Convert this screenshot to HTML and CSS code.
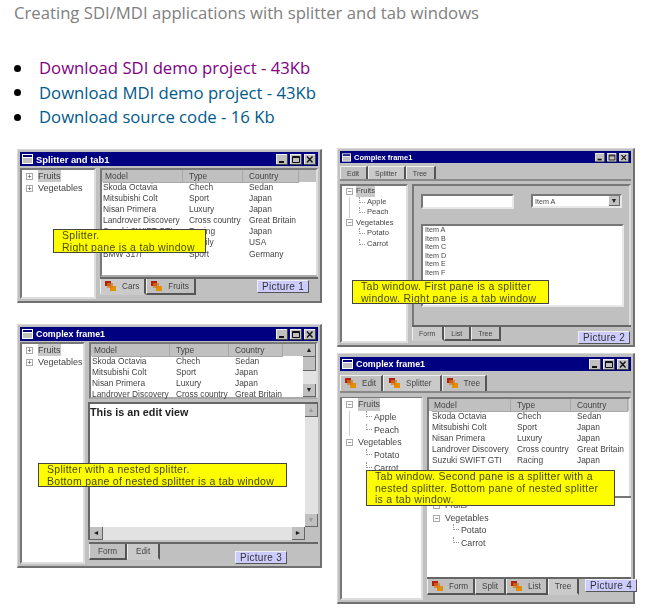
FILE: index.html
```html
<!DOCTYPE html>
<html>
<head>
<meta charset="utf-8">
<title>Creating SDI/MDI applications with splitter and tab windows</title>
<link rel="stylesheet" href="styles.css">
</head>
<body>
<svg class="defs" width="0" height="0">
	<symbol id="tabicon" viewBox="0 0 11 11">
		<rect x="0" y="0" width="6" height="5" fill="#b02010"/>
		<rect x="5" y="5" width="6" height="5" fill="#e09000"/>
		<rect x="2" y="2" width="6" height="5" fill="#d87818" opacity=".7"/>
	</symbol>
	<symbol id="winicon" viewBox="0 0 11 10">
		<rect width="11" height="10" fill="#fff"/>
		<rect x="1" y="1" width="9" height="2" fill="#000080"/>
		<rect x="1" y="4" width="9" height="5" fill="#c0c0c0"/>
	</symbol>
	<symbol id="btnmin" viewBox="0 0 12 11">
		<rect width="12" height="11" fill="#444"/>
		<rect width="11" height="10" fill="#eee"/>
		<rect x="1" y="1" width="10" height="9" fill="#c0c0c0"/>
		<rect x="3" y="7" width="5" height="2" fill="#111"/>
	</symbol>
	<symbol id="btnmax" viewBox="0 0 12 11">
		<rect width="12" height="11" fill="#444"/>
		<rect width="11" height="10" fill="#eee"/>
		<rect x="1" y="1" width="10" height="9" fill="#c0c0c0"/>
		<path d="M2.5 2.5h7v6h-7z M2.5 3.5h7" fill="none" stroke="#111"/>
	</symbol>
	<symbol id="btnclose" viewBox="0 0 12 11">
		<rect width="12" height="11" fill="#444"/>
		<rect width="11" height="10" fill="#eee"/>
		<rect x="1" y="1" width="10" height="9" fill="#c0c0c0"/>
		<path d="M3 2.5l5.5 6M8.5 2.5l-5.5 6" fill="none" stroke="#111" stroke-width="1.4"/>
	</symbol>
</svg>

<div class="title">Creating SDI/MDI applications with splitter and tab windows</div>
<ul class="downloads">
	<li><a class="visited" href="#">Download SDI demo project - 43Kb</a></li>
	<li><a href="#">Download MDI demo project - 43Kb</a></li>
	<li><a href="#">Download source code - 16 Kb</a></li>
</ul>

<div class="shots">

	<!-- Picture 1 -->
	<div class="win win1">
		<div class="caption"><svg class="capicon"><use href="#winicon"/></svg><span class="captext">Splitter and tab1</span><svg class="cbtn"><use href="#btnmin"/></svg><svg class="cbtn"><use href="#btnmax"/></svg><svg class="cbtn"><use href="#btnclose"/></svg></div>
		<div class="split">
			<div class="tree tree1">
				<div class="node"><b class="exp">+</b><span class="sel">Fruits</span></div>
				<div class="node"><b class="exp">+</b><span>Vegetables</span></div>
			</div>
			<div class="right">
				<div class="list grow">
					<div class="row head cols1"><span>Model</span><span>Type</span><span>Country</span></div>
					<div class="row cols1"><span>Skoda Octavia</span><span>Chech</span><span>Sedan</span></div>
					<div class="row cols1"><span>Mitsubishi Colt</span><span>Sport</span><span>Japan</span></div>
					<div class="row cols1"><span>Nisan Primera</span><span>Luxury</span><span>Japan</span></div>
					<div class="row cols1"><span>Landrover Discovery</span><span>Cross country</span><span>Great Britain</span></div>
					<div class="row cols1"><span>Suzuki SWIFT GTI</span><span>Racing</span><span>Japan</span></div>
					<div class="row cols1"><span>Ford Fiesta</span><span>Family</span><span>USA</span></div>
					<div class="row cols1"><span>BMW 317i</span><span>Sport</span><span>Germany</span></div>
				</div>
				<div class="tabs bottom">
					<span class="tab on wide"><svg class="ticon"><use href="#tabicon"/></svg>Cars</span>
					<span class="tab wide"><svg class="ticon"><use href="#tabicon"/></svg>Fruits</span>
				</div>
			</div>
		</div>
	</div>
	<div class="note note1">Splitter.<br>Right pane is a tab window</div>
	<div class="pic pic1">Picture 1</div>

	<!-- Picture 2 -->
	<div class="win win2">
		<div class="caption"><svg class="capicon"><use href="#winicon"/></svg><span class="captext">Complex frame1</span><svg class="cbtn"><use href="#btnmin"/></svg><svg class="cbtn"><use href="#btnmax"/></svg><svg class="cbtn"><use href="#btnclose"/></svg></div>
		<div class="tabs top small">
			<span class="tab">Edit</span><span class="tab on">Splitter</span><span class="tab">Tree</span>
		</div>
		<div class="split">
			<div class="tree tree2">
				<div class="node"><b class="exp">−</b><span class="sel">Fruits</span></div>
				<div class="node leaf open">Apple</div>
				<div class="node leaf open">Peach</div>
				<div class="node"><b class="exp">−</b><span>Vegetables</span></div>
				<div class="node leaf">Potato</div>
				<div class="node leaf">Carrot</div>
			</div>
			<div class="right">
				<div class="form">
					<div class="fields">
						<div class="input"></div>
						<div class="combo"><span>Item A</span><i class="arrow">▼</i></div>
					</div>
					<div class="listbox">
						<div>Item A</div><div>Item B</div><div>Item C</div><div>Item D</div><div>Item E</div><div>Item F</div>
					</div>
				</div>
				<div class="tabs bottom small">
					<span class="tab on">Form</span><span class="tab">List</span><span class="tab">Tree</span>
				</div>
			</div>
		</div>
	</div>
	<div class="note note2">Tab window. First pane is a splitter<br>window. Right pane is a tab window</div>
	<div class="pic pic2">Picture 2</div>

	<!-- Picture 3 -->
	<div class="win win3">
		<div class="caption"><svg class="capicon"><use href="#winicon"/></svg><span class="captext">Complex frame1</span><svg class="cbtn"><use href="#btnmin"/></svg><svg class="cbtn"><use href="#btnmax"/></svg><svg class="cbtn"><use href="#btnclose"/></svg></div>
		<div class="split">
			<div class="tree tree3">
				<div class="node"><b class="exp">+</b><span class="sel">Fruits</span></div>
				<div class="node"><b class="exp">+</b><span>Vegetables</span></div>
			</div>
			<div class="right">
				<div class="list short">
					<div class="listrows">
						<div class="row head cols3"><span>Model</span><span>Type</span><span>Country</span></div>
						<div class="row cols3"><span>Skoda Octavia</span><span>Chech</span><span>Sedan</span></div>
						<div class="row cols3"><span>Mitsubishi Colt</span><span>Sport</span><span>Japan</span></div>
						<div class="row cols3"><span>Nisan Primera</span><span>Luxury</span><span>Japan</span></div>
						<div class="row cols3"><span>Landrover Discovery</span><span>Cross country</span><span>Great Britain</span></div>
					</div>
					<div class="vbar"><i class="arrow">▲</i><i class="thumb"></i><i class="track"></i><i class="arrow">▼</i></div>
				</div>
				<div class="edit">
					<div class="editmain">
						<div class="edittext">This is an edit view</div>
						<div class="hbar"><i class="arrow">◄</i><i class="track"></i><i class="arrow">►</i></div>
					</div>
					<div class="vbar"><i class="arrow dim">▲</i><i class="track"></i><i class="arrow dim">▼</i><i class="corner"></i></div>
				</div>
				<div class="tabs bottom tall">
					<span class="tab">Form</span><span class="tab on">Edit</span>
				</div>
			</div>
		</div>
	</div>
	<div class="note note3">Splitter with a nested splitter.<br>Bottom pane of nested splitter is a tab window</div>
	<div class="pic pic3">Picture 3</div>

	<!-- Picture 4 -->
	<div class="win win4">
		<div class="caption"><svg class="capicon"><use href="#winicon"/></svg><span class="captext">Complex frame1</span><svg class="cbtn"><use href="#btnmin"/></svg><svg class="cbtn"><use href="#btnmax"/></svg><svg class="cbtn"><use href="#btnclose"/></svg></div>
		<div class="tabs top">
			<span class="tab wide"><svg class="ticon"><use href="#tabicon"/></svg>Edit</span>
			<span class="tab on wide"><svg class="ticon"><use href="#tabicon"/></svg>Splitter</span>
			<span class="tab wide"><svg class="ticon"><use href="#tabicon"/></svg>Tree</span>
		</div>
		<div class="split">
			<div class="tree tree4">
				<div class="node"><b class="exp">−</b><span class="sel">Fruits</span></div>
				<div class="node leaf open">Apple</div>
				<div class="node leaf open">Peach</div>
				<div class="node"><b class="exp">−</b><span>Vegetables</span></div>
				<div class="node leaf">Potato</div>
				<div class="node leaf">Carrot</div>
			</div>
			<div class="right">
				<div class="list half">
					<div class="row head cols4"><span>Model</span><span>Type</span><span>Country</span></div>
					<div class="row cols4"><span>Skoda Octavia</span><span>Chech</span><span>Sedan</span></div>
					<div class="row cols4"><span>Mitsubishi Colt</span><span>Sport</span><span>Japan</span></div>
					<div class="row cols4"><span>Nisan Primera</span><span>Luxury</span><span>Japan</span></div>
					<div class="row cols4"><span>Landrover Discovery</span><span>Cross country</span><span>Great Britain</span></div>
					<div class="row cols4"><span>Suzuki SWIFT GTI</span><span>Racing</span><span>Japan</span></div>
				</div>
				<div class="tree tree5">
					<div class="node"><b class="exp">−</b><span>Fruits</span></div>
					<div class="node"><b class="exp">−</b><span>Vegetables</span></div>
					<div class="node leaf">Potato</div>
					<div class="node leaf">Carrot</div>
				</div>
				<div class="tabs bottom">
					<span class="tab wide"><svg class="ticon"><use href="#tabicon"/></svg>Form</span>
					<span class="tab">Split</span>
					<span class="tab wide"><svg class="ticon"><use href="#tabicon"/></svg>List</span>
					<span class="tab on">Tree</span>
				</div>
			</div>
		</div>
	</div>
	<div class="note note4">Tab window. Second pane is a splitter with a<br>nested splitter. Bottom pane of nested splitter<br>is a tab window.</div>
	<div class="pic pic4">Picture 4</div>

</div>
</body>
</html>
```
FILE: styles.css
```css
html, body {
	margin: 0;
	padding: 0;
	background: #fff;
	overflow: hidden;
}
body {
	width: 648px;
	height: 610px;
	font-family: "Open Sans", "Noto Sans", sans-serif;
}
.defs {
	position: absolute;
}
.title {
	height: 27px;
	padding: 1px 0 0 14px;
	font-size: 16.7px;
	line-height: 24px;
	color: #808080;
}
.downloads {
	margin: 28px 0 0;
	padding: 0 0 0 14px;
	list-style: none;
	font-size: 16.7px;
	line-height: 24.5px;
}
.downloads li {
	display: flex;
	align-items: center;
	gap: 18px;
}
.downloads li::before {
	content: "";
	width: 7px;
	height: 7px;
	border-radius: 50%;
	background: #000;
}
.downloads a {
	color: #005a8c;
	text-decoration: none;
}
.downloads a.visited {
	color: #800080;
}

/* the four pictures lie free on the page, coordinates are relative to .shots */
.shots {
	position: absolute;
	left: 0;
	top: 0;
	width: 648px;
	height: 610px;
	font-family: "Liberation Sans", sans-serif;
	font-size: 9px;
	color: #444;
}
.win {
	position: absolute;
	box-sizing: border-box;
	display: flex;
	flex-direction: column;
	padding: 2px 2px 2px;
	background: #c0c0c0;
	border: 1px solid #d8d8d8;
	border-right: 2px solid #707070;
	border-bottom: 2px solid #707070;
	filter: blur(.65px);
}
.win1 { left: 17px; top: 149px; width: 305px; height: 154px; }
.win2 { left: 337px; top: 148px; width: 298px; height: 199px; }
.win3 { left: 17px; top: 324px; width: 305px; height: 244px; }
.win4 { left: 337px; top: 353px; width: 298px; height: 251px; padding-top: 3px; }

.caption {
	flex: none;
	display: flex;
	align-items: center;
	gap: 2px;
	height: 14px;
	padding: 0 2px 0 2px;
	background: #000080;
	color: #fff;
	font-weight: bold;
}
.win2 .caption {
	height: 12px;
}
.capicon {
	width: 11px;
	height: 10px;
	margin-right: 1px;
}
.win2 .capicon {
	width: 9px;
	height: 9px;
}
.captext {
	flex: 1;
	font-size: 8.9px;
}
.win1 .captext {
	font-size: 9.4px;
}
.win2 .captext {
	font-size: 7.5px;
}
.cbtn {
	flex: none;
	width: 12px;
	height: 11px;
}
.win2 .cbtn {
	width: 10px;
	height: 9px;
}

.split {
	flex: 1;
	min-height: 0;
	display: flex;
	gap: 4px;
	padding-top: 1px;
}
.win1 .split {
	padding-top: 2px;
}
.tree {
	flex: none;
	box-sizing: border-box;
	background: #fff;
	border: 2px solid #777;
	border-right-color: #ddd;
	border-bottom-color: #ddd;
	padding: 0 0 0 4px;
	line-height: 12px;
}
.tree1 { width: 76px; }
.tree2 { width: 68px; line-height: 10.5px; font-size: 7.6px; }
.tree3 { width: 65px; }
.tree4 { width: 83px; line-height: 12.8px; font-size: 8.8px; border-top-width: 1px; }
.tree5 {
	flex: 1;
	width: auto;
	border: 0;
	border-top: 2px solid #777;
	padding: 1px 0 0 6px;
	line-height: 12.7px;
	font-size: 8.8px;
}
.node {
	display: flex;
	align-items: center;
	gap: 5px;
	white-space: nowrap;
}
.tree2 .node {
	gap: 3px;
}
.exp {
	box-sizing: border-box;
	flex: none;
	width: 7px;
	height: 7px;
	border: 1px solid #aaa;
	font-weight: normal;
	font-size: 7px;
	line-height: 5px;
	text-align: center;
	color: #333;
}
.node.leaf {
	gap: 2px;
	padding-left: 13px;
}
.leaf::before {
	content: "";
	flex: none;
	align-self: flex-start;
	width: 5px;
	height: 5px;
	border-left: 1px dotted #999;
	border-bottom: 1px dotted #999;
}
.leaf.open {
	background: linear-gradient(#ccc, #ccc) 3px 0 / 1px 100% no-repeat;
}
.tree4 .node.leaf, .tree5 .node.leaf {
	padding-left: 20px;
}
.sel {
	background: #c8c8c8;
}

.right {
	flex: 1;
	min-width: 0;
	display: flex;
	flex-direction: column;
}
.list {
	box-sizing: border-box;
	background: #fff;
	border: 2px solid #777;
	border-right-color: #ddd;
	border-bottom-color: #aaa;
}
.grow { flex: 1; }
.half { height: 99px; overflow: hidden; border-bottom: 0; }
.short {
	display: flex;
	height: 57px;
}
.listrows {
	flex: 1;
	min-width: 0;
}
.row {
	display: grid;
	height: 11.1px;
	line-height: 11px;
	padding-left: 1px;
	font-size: 8.4px;
	white-space: nowrap;
}
.row span + span {
	padding-left: 6px;
}
.row.head {
	height: 12px;
	background: #c0c0c0;
	line-height: 12px;
}
.row.head span {
	border-right: 1px solid #a8a8a8;
	border-bottom: 1px solid #a8a8a8;
}
.row.head span:first-child {
	padding-left: 2px;
}
.cols1 { grid-template-columns: 80px 60px 56px; }
.cols3 { grid-template-columns: 78px 59px 54px; }
.cols4 { grid-template-columns: 79px 60px 57px; padding-left: 3px; }
.row.cols4.head { padding-left: 3px; }

.tabs {
	flex: none;
	display: flex;
	align-items: flex-start;
	box-sizing: border-box;
	height: 22px;
	font-size: 8.2px;
}
.tabs.bottom {
	border-top: 2px solid #666;
}
.win2 .tabs.bottom {
	height: 18px;
}
.win4 .tabs.bottom {
	height: 23px;
}
.tabs.top {
	margin-bottom: 3px;
	align-items: flex-end;
	border-bottom: 2px solid #888;
}
.win2 .tabs.top {
	height: 18px;
	margin-bottom: 2px;
}
.tabs.small {
	font-size: 7px;
}
.tab {
	box-sizing: border-box;
	display: flex;
	align-items: center;
	gap: 6px;
	height: 16px;
	padding: 0 6px;
	border-right: 2px solid #555;
	border-bottom: 2px solid #555;
	border-left: 1px solid #eee;
}
.small .tab {
	height: 14px;
	padding: 0 7px 0 6px;
}
.tall .tab {
	padding: 0 8px;
}
.tabs.top .tab {
	border-bottom: 0;
	border-top: 1px solid #eee;
	height: 16px;
}
.win2 .tabs.top .tab {
	height: 13px;
}
.tab.on {
	background: #cacaca;
	border-bottom-color: #cacaca;
}
.tab.wide {
	padding: 0 5px 0 4px;
}
.win4 .tabs.top .tab.on {
	padding: 0 8px 0 5px;
}
.ticon {
	flex: none;
	width: 11px;
	height: 11px;
}

/* form page of picture 2 */
.form {
	flex: 1;
	display: flex;
	flex-direction: column;
	gap: 15px;
	padding: 8px 5px 0 7px;
	border: 2px solid #777;
	border-right-color: #ddd;
	border-bottom: 0;
}
.fields {
	display: flex;
	justify-content: space-between;
	padding-right: 2px;
	font-size: 7.2px;
}
.input, .combo, .listbox {
	box-sizing: border-box;
	background: #fff;
	border: 2px solid #777;
	border-right-color: #e8e8e8;
	border-bottom-color: #e8e8e8;
}
.input {
	width: 93px;
	height: 15px;
}
.combo {
	display: flex;
	justify-content: space-between;
	align-items: center;
	width: 91px;
	height: 14px;
	padding-left: 2px;
}
.listbox {
	height: 83px;
	padding-left: 2px;
	font-size: 7.2px;
	line-height: 8.6px;
}

/* scrollbars of picture 3 */
.edit {
	flex: 1;
	min-height: 0;
	display: flex;
	margin: 3px 0 2px -1px;
	background: #fff;
	border-top: 2px solid #666;
	border-left: 2px solid #666;
}
.editmain {
	flex: 1;
	min-width: 0;
	display: flex;
	flex-direction: column;
}
.edittext {
	flex: 1;
	padding-top: 1px;
	font-weight: bold;
	font-size: 10.8px;
	line-height: 14px;
	color: #222;
}
.vbar, .hbar {
	flex: none;
	display: flex;
	background: #e2e2e2;
}
.vbar {
	flex-direction: column;
	width: 13px;
}
.hbar {
	height: 13px;
}
.arrow {
	flex: none;
	box-sizing: border-box;
	width: 13px;
	height: 13px;
	background: #c0c0c0;
	border-right: 1px solid #666;
	border-bottom: 1px solid #666;
	font-style: normal;
	font-size: 7px;
	line-height: 12px;
	text-align: center;
	color: #222;
}
.arrow.dim {
	color: #999;
}
.fields .arrow {
	width: 11px;
	height: 10px;
	line-height: 9px;
}
.thumb {
	flex: none;
	box-sizing: border-box;
	height: 14px;
	background: #c0c0c0;
	border-right: 1px solid #666;
	border-bottom: 1px solid #666;
}
.track {
	flex: 1;
}
.corner {
	flex: none;
	height: 13px;
	background: #c0c0c0;
}

/* callouts and labels drawn on top of the pictures */
.note {
	position: absolute;
	box-sizing: border-box;
	background: #fdfd00;
	border: 1px solid #444;
	padding: 0 0 0 8px;
	font-size: 10.5px;
	line-height: 11.6px;
	letter-spacing: .28px;
	color: #4a4a00;
	white-space: nowrap;
	filter: blur(.35px);
}
.note1 { left: 53px; top: 229px; width: 153px; height: 24px; }
.note2 { left: 352px; top: 280px; width: 197px; height: 24px; }
.note3 { left: 38px; top: 463px; width: 249px; height: 24px; }
.note4 { left: 366px; top: 470px; width: 249px; height: 36px; }
.pic {
	position: absolute;
	box-sizing: border-box;
	width: 52px;
	height: 13px;
	background: #ccccff;
	border: 1px solid #555;
	border-left-color: #eee;
	border-top-color: #eee;
	font-size: 10px;
	line-height: 11px;
	letter-spacing: .3px;
	text-align: center;
	color: #333;
	filter: blur(.3px);
}
.pic1 { left: 257px; top: 280px; }
.pic2 { left: 578px; top: 331px; }
.pic3 { left: 235px; top: 551px; }
.pic4 { left: 585px; top: 579px; }
```
